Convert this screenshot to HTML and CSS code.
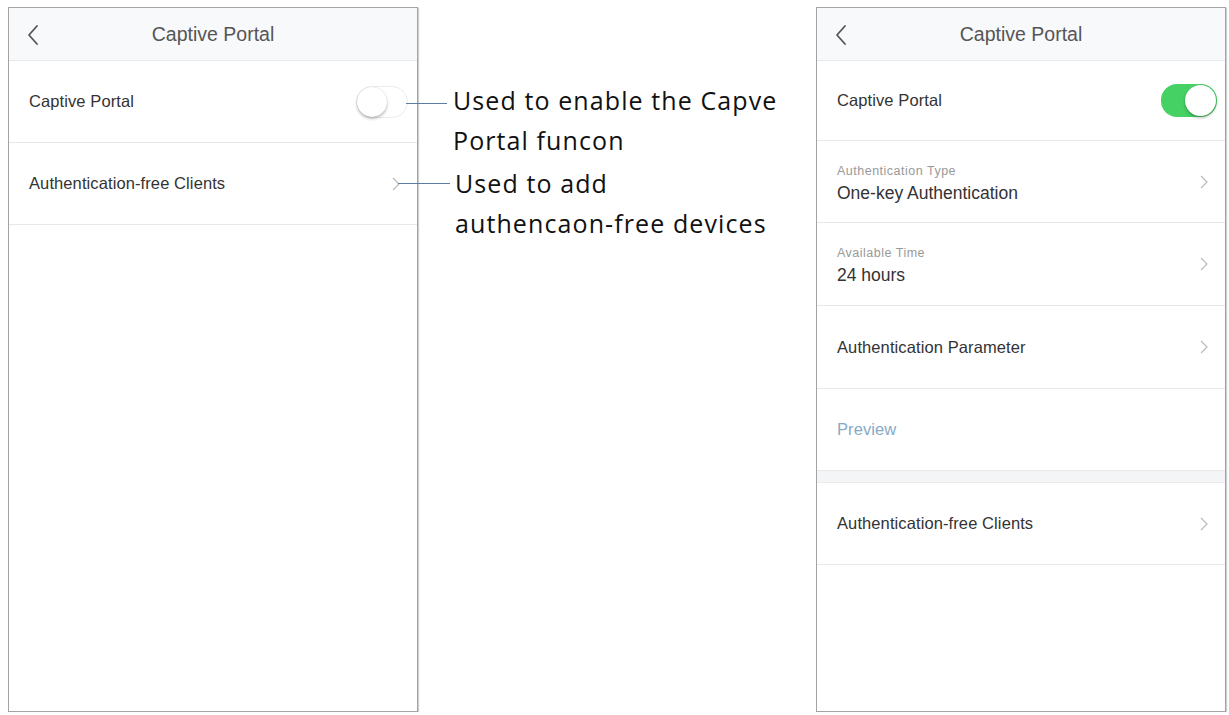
FILE: index.html
```html
<!DOCTYPE html>
<html lang="en">
<head>
  <meta charset="UTF-8">
  <title>Captive Portal</title>
  <link rel="stylesheet" href="styles.css">
</head>
<body>

<div class="phone">
  <div class="nav">
    <svg class="back" width="12" height="22" viewBox="0 0 12 22"><path d="M10 2 L2 11 L10 20" fill="none" stroke="#555" stroke-width="1.8" stroke-linecap="round" stroke-linejoin="round"/></svg>
    <span class="nav-title">Captive Portal</span>
  </div>
  <div class="row">
    <span class="label">Captive Portal</span>
    <span class="switch"><span class="knob"></span></span>
  </div>
  <div class="row">
    <span class="label">Authentication-free Clients</span>
    <svg class="chev" width="8" height="14" viewBox="0 0 8 14"><path d="M1 1 L7 7 L1 13" fill="none" stroke="#bbb" stroke-width="1.2"/></svg>
  </div>
</div>

<div class="notes">
  <div class="note note-first">
    <span class="lead"></span>
    <p>Used to enable the Capve<br>Portal funcon</p>
  </div>
  <div class="note note-second">
    <span class="lead"></span>
    <p>Used to add<br>authencaon-free devices</p>
  </div>
</div>

<div class="phone phone-right">
  <div class="nav">
    <svg class="back" width="12" height="22" viewBox="0 0 12 22"><path d="M10 2 L2 11 L10 20" fill="none" stroke="#555" stroke-width="1.8" stroke-linecap="round" stroke-linejoin="round"/></svg>
    <span class="nav-title">Captive Portal</span>
  </div>
  <div class="row row-top">
    <span class="label">Captive Portal</span>
    <span class="switch on"><span class="knob"></span></span>
  </div>
  <div class="row">
    <div class="stack">
      <span class="small">Authentication Type</span>
      <span class="value">One-key Authentication</span>
    </div>
    <svg class="chev" width="8" height="14" viewBox="0 0 8 14"><path d="M1 1 L7 7 L1 13" fill="none" stroke="#bbb" stroke-width="1.2"/></svg>
  </div>
  <div class="row row-tall">
    <div class="stack">
      <span class="small">Available Time</span>
      <span class="value">24 hours</span>
    </div>
    <svg class="chev" width="8" height="14" viewBox="0 0 8 14"><path d="M1 1 L7 7 L1 13" fill="none" stroke="#bbb" stroke-width="1.2"/></svg>
  </div>
  <div class="row row-tall">
    <span class="label">Authentication Parameter</span>
    <svg class="chev" width="8" height="14" viewBox="0 0 8 14"><path d="M1 1 L7 7 L1 13" fill="none" stroke="#bbb" stroke-width="1.2"/></svg>
  </div>
  <div class="row">
    <span class="label link">Preview</span>
  </div>
  <div class="gap"></div>
  <div class="row">
    <span class="label">Authentication-free Clients</span>
    <svg class="chev" width="8" height="14" viewBox="0 0 8 14"><path d="M1 1 L7 7 L1 13" fill="none" stroke="#bbb" stroke-width="1.2"/></svg>
  </div>
</div>

</body>
</html>
```

FILE: styles.css
```css
body {
  margin: 0;
  padding: 7px 3px 0 8px;
  display: flex;
  align-items: flex-start;
  background: #fff;
  font-family: "Liberation Sans", Arial, sans-serif;
}
.phone {
  width: 408px;
  height: 703px;
  border: 1px solid #a3a3a3;
  box-shadow: 1px 1px 1px #cfcfcf;
  background: #fff;
  flex-shrink: 0;
  display: flex;
  flex-direction: column;
}
.phone-right {
  margin-left: auto;
}
.nav {
  height: 52px;
  background: #f8f9fa;
  border-bottom: 1px solid #e8e9eb;
  display: flex;
  align-items: center;
  justify-content: center;
  position: relative;
}
.back {
  position: absolute;
  left: 18px;
  top: 16px;
}
.nav-title {
  font-size: 19.5px;
  color: #555;
}
.row {
  height: 81px;
  border-bottom: 1px solid #e8e8e8;
  display: flex;
  align-items: center;
  justify-content: space-between;
  padding: 0 15px 0 20px;
}
.row-top {
  height: 79px;
}
.row-tall {
  height: 82px;
}
.label {
  font-size: 16.5px;
  letter-spacing: 0.1px;
  color: #333;
}
.link {
  color: #86aac6;
}
.stack {
  display: flex;
  flex-direction: column;
  gap: 5px;
  padding-top: 4px;
}
.small {
  font-size: 12.5px;
  letter-spacing: 0.5px;
  color: #999;
}
.value {
  font-size: 17.5px;
  color: #333;
}
.chev {
  margin-right: 2px;
}
.gap {
  height: 11px;
  background: #f4f5f7;
  border-bottom: 1px solid #ebebeb;
}
.switch {
  width: 52px;
  height: 32px;
  border-radius: 16px;
  border: 1px solid #ececec;
  box-sizing: border-box;
  display: flex;
  align-items: center;
  margin-right: -6px;
}
.knob {
  width: 30px;
  height: 30px;
  border-radius: 50%;
  background: #fff;
  box-shadow: 0 2px 3px rgba(0, 0, 0, 0.25), 0 0 1px rgba(0, 0, 0, 0.2);
}
.switch.on {
  width: 56px;
  height: 33px;
  border: none;
  background: #45d163;
  justify-content: flex-end;
  padding-right: 1px;
  margin-right: -7px;
}
.switch.on .knob {
  width: 31px;
  height: 31px;
}
.notes {
  display: flex;
  flex-direction: column;
  gap: 3px;
  padding-top: 73px;
  margin-left: -12px;
  position: relative;
}
.note {
  display: flex;
  align-items: flex-start;
}
.note p {
  margin: 0;
  font-family: "Open Sans", sans-serif;
  font-size: 25px;
  letter-spacing: 1.1px;
  line-height: 40px;
  color: #111;
  white-space: nowrap;
}
.lead {
  width: 41px;
  height: 1px;
  background: #5b7ea3;
  margin: 23px 6px 0 0;
}
.note-second {
  margin-left: -8px;
}
.note-second .lead {
  width: 52px;
  margin-top: 20px;
  margin-right: 5px;
}
```
